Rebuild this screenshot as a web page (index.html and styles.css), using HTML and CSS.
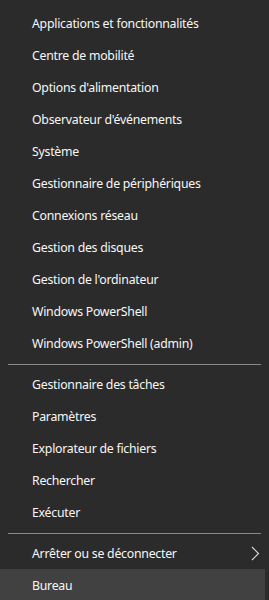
FILE: index.html
```html
<!DOCTYPE html>
<html lang="fr">
<head>
<meta charset="utf-8">
<link rel="stylesheet" href="styles.css">
</head>
<body>
<nav class="menu">
  <ul class="group">
    <li class="item">Applications et fonctionnalités</li>
    <li class="item">Centre de mobilité</li>
    <li class="item">Options d'alimentation</li>
    <li class="item">Observateur d'événements</li>
    <li class="item">Système</li>
    <li class="item">Gestionnaire de périphériques</li>
    <li class="item">Connexions réseau</li>
    <li class="item">Gestion des disques</li>
    <li class="item">Gestion de l'ordinateur</li>
    <li class="item">Windows PowerShell</li>
    <li class="item">Windows PowerShell (admin)</li>
  </ul>
  <div class="sep"></div>
  <ul class="group">
    <li class="item">Gestionnaire des tâches</li>
    <li class="item">Paramètres</li>
    <li class="item">Explorateur de fichiers</li>
    <li class="item">Rechercher</li>
    <li class="item">Exécuter</li>
  </ul>
  <div class="sep"></div>
  <ul class="group">
    <li class="item has-sub">Arrêter ou se déconnecter
      <svg class="chev" width="9" height="15" viewBox="0 0 9 15"><path d="M1 1 L7.5 7.5 L1 14" fill="none" stroke="#d6d6d6" stroke-width="1.2"/></svg>
    </li>
    <li class="item active">Bureau</li>
  </ul>
</nav>
</body>
</html>
```

FILE: styles.css
```css
html, body {
  margin: 0;
  padding: 0;
  background: #2b2b2b;
  height: 600px;
  overflow: hidden;
}
.menu {
  width: 269px;
  padding-top: 7px;
  font-family: "Noto Sans", "Open Sans", sans-serif;
  font-size: 12.3px;
  letter-spacing: -0.25px;
  color: #f7f7f7;
}
.group {
  list-style: none;
  margin: 0;
  padding: 0;
}
.item {
  height: 32px;
  display: flex;
  align-items: center;
  padding-left: 32px;
  padding-right: 9px;
  box-sizing: border-box;
  white-space: nowrap;
}
.has-sub {
  justify-content: space-between;
}
.chev {
  display: block;
}
.active {
  background: #414141;
  margin-right: 4px;
}
.sep {
  height: 9px;
  display: flex;
  align-items: center;
  padding: 0 8px;
}
.sep::before {
  content: "";
  display: block;
  width: 100%;
  height: 1px;
  margin-top: 1px;
  background: #8a8a8a;
}
```
